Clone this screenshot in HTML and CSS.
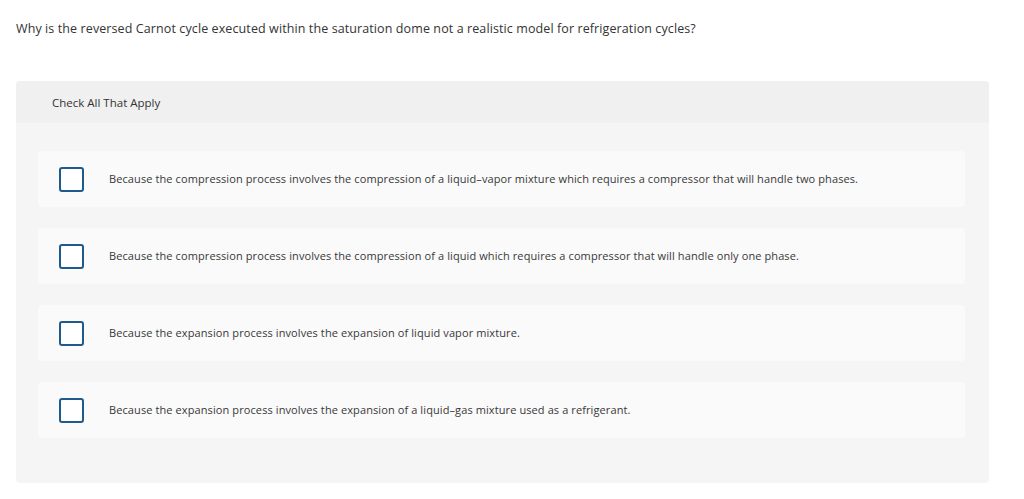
FILE: index.html
```html
<!DOCTYPE html>
<html>
<head>
<meta charset="utf-8">
<link rel="stylesheet" href="styles.css">
</head>
<body>
<p class="question">Why is the reversed Carnot cycle executed within the saturation dome not a realistic model for refrigeration cycles?</p>
<div class="panel">
  <div class="panel-head">Check All That Apply</div>
  <div class="options">
    <label class="option"><span class="box"></span><span class="text">Because the compression process involves the compression of a liquid–vapor mixture which requires a compressor that will handle two phases.</span></label>
    <label class="option"><span class="box"></span><span class="text">Because the compression process involves the compression of a liquid which requires a compressor that will handle only one phase.</span></label>
    <label class="option"><span class="box"></span><span class="text">Because the expansion process involves the expansion of liquid vapor mixture.</span></label>
    <label class="option"><span class="box"></span><span class="text">Because the expansion process involves the expansion of a liquid–gas mixture used as a refrigerant.</span></label>
  </div>
</div>
</body>
</html>
```
FILE: styles.css
```css
html, body { margin: 0; padding: 0; background: #fff; }
body { font-family: "Open Sans", "Noto Sans", sans-serif; color: #333; padding: 0 35px 0 16px; }
.question { margin: 0; padding-top: 21px; font-size: 12.5px; letter-spacing: 0.1px; line-height: 16px; color: #333; }
.panel { margin-top: 44px; background: #f5f5f5; border-radius: 4px; overflow: hidden; height: 402px; }
.panel-head { background: #f0f0f0; height: 42px; display: flex; align-items: center; padding-left: 36px; font-size: 11.5px; color: #333; }
.options { display: flex; flex-direction: column; gap: 21px; padding: 28px 24px 0 22px; }
.option { display: flex; align-items: center; height: 56px; background: #fafafa; border-radius: 4px; padding-left: 21px; }
.box { width: 21px; height: 21px; border: 2px solid #1f5a8d; border-radius: 3px; background: #fff; flex: none; }
.text { margin-left: 25px; font-size: 11px; letter-spacing: 0.1px; line-height: 14px; padding-bottom: 1px; color: #383838; }
```
